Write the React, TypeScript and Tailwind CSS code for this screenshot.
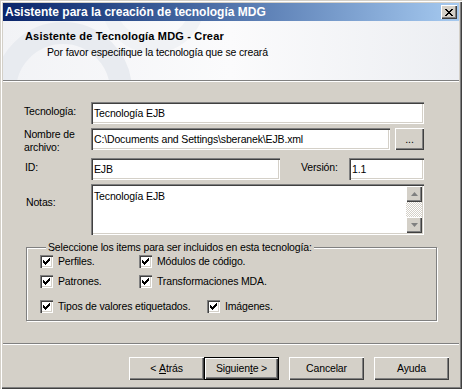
import React from "react";

const sunken =
  "bg-white shadow-[inset_1px_1px_0_#808080,inset_2px_2px_0_#404040,inset_-1px_-1px_0_#ffffff,inset_-2px_-2px_0_#d4d0c8]";
const raised =
  "bg-[#d4d0c8] shadow-[inset_1px_1px_0_#ffffff,inset_-1px_-1px_0_#404040,inset_-2px_-2px_0_#808080]";

function Field({ value, className = "" }: { value: string; className?: string }) {
  return (
    <div className={`${sunken} flex h-[22px] items-center px-[3px] ${className}`}>
      <span className="text-black">{value}</span>
    </div>
  );
}

function CheckMark() {
  return (
    <svg width="7" height="7" viewBox="0 0 7 7" shapeRendering="crispEdges">
      <path
        fill="#000"
        d="M6 0h1v3h-1v1h-1v1h-1v1h-1v1h-1v-1h-1v-1h-1v-3h1v1h1v1h1v-1h1v-1h1z"
      />
    </svg>
  );
}

function Check({ label, className = "" }: { label: string; className?: string }) {
  return (
    <div className={`flex items-center ${className}`}>
      <div className={`${sunken} flex h-[13px] w-[13px] shrink-0 items-center justify-center`}>
        <CheckMark />
      </div>
      <span className="ml-[5px] leading-[13px]">{label}</span>
    </div>
  );
}

function Button({
  children,
  isDefault = false,
}: {
  children: React.ReactNode;
  isDefault?: boolean;
}) {
  return (
    <div
      className={`flex h-[23px] w-[75px] items-center justify-center ${
        isDefault
          ? "bg-[#d4d0c8] shadow-[inset_0_0_0_1px_#000000,inset_2px_2px_0_#ffffff,inset_-2px_-2px_0_#404040,inset_-3px_-3px_0_#808080]"
          : raised
      }`}
    >
      {children}
    </div>
  );
}

export default function App() {
  return (
    <div className="h-[389px] w-[462px] overflow-hidden bg-[#d4d0c8] p-[3px] font-['Liberation_Sans',Arial,sans-serif] text-[10.5px] leading-[13px] tracking-[-0.15px] text-black shadow-[inset_1px_1px_0_#d4d0c8,inset_2px_2px_0_#ffffff,inset_-1px_-1px_0_#404040,inset_-2px_-2px_0_#808080]">
      <div className="flex h-full flex-col">
        {/* title bar */}
        <div className="flex h-[18px] shrink-0 items-center bg-gradient-to-r from-[#0a246a] to-[#a6caf0] pl-[2px] pr-[2px]">
          <span className="flex-1 text-[12px] font-bold tracking-normal text-white">
            Asistente para la creación de tecnología MDG
          </span>
          <div className={`${raised} flex h-[14px] w-[16px] items-center justify-center`}>
            <svg width="8" height="7" viewBox="0 0 8 7" shapeRendering="crispEdges">
              <path
                fill="#000"
                d="M0 0h2v1h1v1h2v-1h1v-1h2v1h-1v1h-1v1h-1v1h1v1h1v1h1v1h-2v-1h-1v-1h-2v1h-1v1h-2v-1h1v-1h1v-1h1v-1h-1v-1h-1v-1h-1z"
              />
            </svg>
          </div>
        </div>

        {/* header */}
        <div className="relative h-[59px] shrink-0 overflow-hidden bg-gradient-to-r from-[#f2f3f6] via-[#fbfbfc] to-[#eceef2] pl-[22px] pt-[9px]">
          <svg className="absolute left-0 top-0" width="200" height="59" viewBox="0 0 200 59">
            <circle cx="60" cy="70" r="58" fill="none" stroke="#e8ebf0" strokeWidth="22" />
            <circle cx="150" cy="-20" r="45" fill="none" stroke="#f0f2f5" strokeWidth="14" />
          </svg>
          <div className="relative">
            <div className="text-[11px] font-bold tracking-[0.17px]">Asistente de Tecnología MDG - Crear</div>
            <div className="mt-[3px] pl-[22px]">Por favor especifique la tecnología que se creará</div>
          </div>
        </div>
        <div className="h-px shrink-0 bg-[#808080]" />
        <div className="h-px shrink-0 bg-white" />

        {/* form */}
        <div className="flex flex-col gap-[4px] pl-[21px] pr-[35px] pt-[20px]">
          <div className="flex items-start">
            <div className="w-[67px] pt-[3px]">Tecnología:</div>
            <Field value="Tecnología EJB" className="flex-1" />
          </div>
          <div className="flex items-start">
            <div className="w-[67px]">
              <div>Nombre de</div>
              <div>archivo:</div>
            </div>
            <Field value="C:\Documents and Settings\sberanek\EJB.xml" className="flex-1" />
            <div className={`${raised} ml-[5px] flex h-[22px] w-[29px] items-center justify-center`}>
              ...
            </div>
          </div>
          <div className="flex items-start">
            <div className="w-[67px] pl-[1px] pt-[3px]">ID:</div>
            <Field value="EJB" className="w-[189px]" />
            <div className="ml-[21px] w-[48px] pt-[3px]">Versión:</div>
            <Field value="1.1" className="flex-1" />
          </div>
          <div className="flex items-start">
            <div className="w-[67px] pl-[2px] pt-[12px]">Notas:</div>
            <div className={`${sunken} flex h-[51px] flex-1 p-[2px]`}>
              <div className="flex-1 pl-[1px] pt-[4px]">Tecnología EJB</div>
              <div className="flex w-[16px] flex-col">
                <div className={`${raised} flex h-[16px] items-center justify-center`}>
                  <svg width="7" height="4" viewBox="0 0 7 4">
                    <path d="M3.5 0L7 4H0z" fill="#808080" />
                  </svg>
                </div>
                <div className="flex-1 bg-[repeating-conic-gradient(#d4d0c8_0_25%,#ffffff_0_50%)] bg-[length:2px_2px]" />
                <div className={`${raised} flex h-[16px] items-center justify-center`}>
                  <svg width="7" height="4" viewBox="0 0 7 4">
                    <path d="M0 0H7L3.5 4z" fill="#808080" />
                  </svg>
                </div>
              </div>
            </div>
          </div>
        </div>

        {/* group box */}
        <fieldset className="ml-[23px] mr-[22px] mt-[6px] h-[80px] shrink-0 border border-[#808080] pl-[13px] shadow-[1px_1px_0_#ffffff,inset_1px_1px_0_#ffffff]">
          <legend className="ml-[6px] bg-[#d4d0c8] px-[2px]">
            Seleccione los items para ser incluidos en esta tecnología:
          </legend>
          <div className="mt-[1px] flex">
            <Check label="Perfiles." className="w-[99px]" />
            <Check label="Módulos de código." />
          </div>
          <div className="mt-[7px] flex">
            <Check label="Patrones." className="w-[99px]" />
            <Check label="Transformaciones MDA." />
          </div>
          <div className="mt-[12px] flex">
            <Check label="Tipos de valores etiquetados." className="w-[167px]" />
            <Check label="Imágenes." />
          </div>
        </fieldset>

        {/* footer */}
        <div className="mt-[22px] h-px bg-[#808080]" />
        <div className="h-px bg-white" />
        <div className="flex justify-end gap-[10px] pr-[10px] pt-[12px]">
          <div className="flex">
            <Button>
              &lt; <span className="ml-[3px] underline">A</span>trás
            </Button>
            <Button isDefault>
              Siguien<span className="underline">t</span>e &gt;
            </Button>
          </div>
          <Button>Cancelar</Button>
          <Button>Ayuda</Button>
        </div>
      </div>
    </div>
  );
}
